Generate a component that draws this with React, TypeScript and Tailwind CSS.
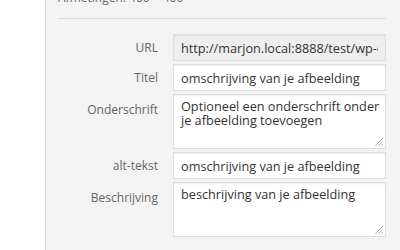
const fields = [
  { label: "URL", value: "http://marjon.local:8888/test/wp-content/uploads/2014/afbeelding.jpg", kind: "url" },
  { label: "Titel", value: "omschrijving van je afbeelding", kind: "input" },
  { label: "Onderschrift", value: "Optioneel een onderschrift onder je afbeelding toevoegen", kind: "area" },
  { label: "alt-tekst", value: "omschrijving van je afbeelding", kind: "input" },
  { label: "Beschrijving", value: "beschrijving van je afbeelding", kind: "area" },
];

function Grip() {
  return (
    <svg className="absolute right-[2px] bottom-[2px]" width="10" height="10" viewBox="0 0 10 10">
      <path d="M9 1 L1 9 M9 4 L4 9 M9 7 L7 9" stroke="#b4b4b4" strokeWidth="1" />
    </svg>
  );
}

function Field({ label, value, kind }: { label: string; value: string; kind: string }) {
  const isArea = kind === "area";
  return (
    <div className="flex items-start">
      <div
        className={`w-[100px] text-right text-[12px] text-[#666] ${isArea ? "pt-[7px]" : "pt-[5px]"}`}
      >
        {label}
      </div>
      <div className="ml-[15px] w-[213px] relative">
        {isArea ? (
          <>
            <textarea
              readOnly
              value={value}
              className="block w-full h-[55px] resize-none overflow-hidden bg-white border border-[#dddddd] shadow-[inset_0_1px_2px_rgba(0,0,0,0.07)] pl-[7px] pr-[2px] py-[5px] text-[12.7px] leading-[13.5px] text-[#333] outline-none"
            />
            <Grip />
          </>
        ) : (
          <input
            readOnly
            value={value}
            className={`block w-full h-[27px] border border-[#dddddd] px-[7px] text-[12.7px] text-[#333] outline-none shadow-[inset_0_1px_2px_rgba(0,0,0,0.07)] ${kind === "url" ? "bg-[#eeeeee]" : "bg-white"}`}
          />
        )}
      </div>
    </div>
  );
}

export default function App() {
  return (
    <div className="w-[400px] h-[250px] overflow-hidden flex bg-white font-['Open_Sans',sans-serif]">
      <div className="w-[45px] shrink-0 bg-white" />
      <div className="flex-1 bg-[#f3f3f3] border-l border-[#dddddd] pl-[12px]">
        {/* DIMENSIONS */}
        <div className="mt-[-10px] text-[12px] leading-[16px] text-[#666]">Afmetingen: 400 × 400</div>
        <div className="mt-[12px] w-[328px] border-t border-[#dddddd]" />

        {/* FIELDS */}
        <div className="mt-[15px] flex flex-col gap-[3px]">
          {fields.map((f) => (
            <Field key={f.label} {...f} />
          ))}
        </div>

        {/* DISPLAY SETTINGS */}
        <div className="mt-[11px] text-[12px] leading-[16px] font-bold uppercase text-[#666] pl-[20px]">
          Weergave-instellingen bijlage
        </div>
      </div>
    </div>
  );
}
